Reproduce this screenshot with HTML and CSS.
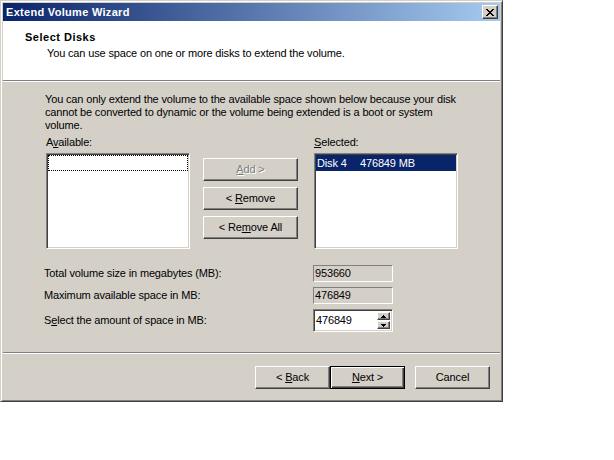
FILE: index.html
```html
<!DOCTYPE html>
<html>
<head>
<meta charset="utf-8">
<title>Extend Volume Wizard</title>
<link rel="stylesheet" href="styles.css">
</head>
<body>
<div class="window">
  <div class="titlebar">
    <span class="title">Extend Volume Wizard</span>
    <span class="close"><svg width="8" height="7" viewBox="0 0 8 7" shape-rendering="crispEdges"><path d="M0 0h2v1H0zM6 0h2v1H6zM1 1h2v1H1zM5 1h2v1H5zM2 2h4v1H2zM3 3h2v1H3zM2 4h4v1H2zM1 5h2v1H1zM5 5h2v1H5zM0 6h2v1H0zM6 6h2v1H6z" fill="#000"/></svg></span>
  </div>
  <div class="header">
    <div class="h-title">Select Disks</div>
    <div class="h-sub">You can use space on one or more disks to extend the volume.</div>
  </div>
  <div class="sep"></div>
  <div class="content">
    <p class="note">You can only extend the volume to the available space shown below because your disk<br>cannot be converted to dynamic or the volume being extended is a boot or system<br>volume.</p>
    <div class="picker">
      <div class="col">
        <div class="lbl">A<u>v</u>ailable:</div>
        <div class="listbox"><div class="focusrow"></div></div>
      </div>
      <div class="mid">
        <div class="btn disabled"><span><u>A</u>dd &gt;</span></div>
        <div class="btn"><span>&lt; <u>R</u>emove</span></div>
        <div class="btn"><span>&lt; Re<u>m</u>ove All</span></div>
      </div>
      <div class="col">
        <div class="lbl"><u>S</u>elected:</div>
        <div class="listbox"><div class="item"><span class="c1">Disk 4</span><span>476849 MB</span></div></div>
      </div>
    </div>
    <div class="fields">
      <div class="flbl">Total volume size in megabytes (MB):</div>
      <div class="ro">953660</div>
      <div class="flbl">Maximum available space in MB:</div>
      <div class="ro">476849</div>
      <div class="flbl">S<u>e</u>lect the amount of space in MB:</div>
      <div class="spin">
        <span class="spin-val">476849</span>
        <span class="spinbtns">
          <span class="sb"><svg width="5" height="3" viewBox="0 0 5 3" shape-rendering="crispEdges"><path d="M2 0h1v1H2zM1 1h3v1H1zM0 2h5v1H0z" fill="#000"/></svg></span>
          <span class="sb"><svg width="5" height="3" viewBox="0 0 5 3" shape-rendering="crispEdges"><path d="M0 0h5v1H0zM1 1h3v1H1zM2 2h1v1H2z" fill="#000"/></svg></span>
        </span>
      </div>
    </div>
  </div>
  <div class="sep"></div>
  <div class="footer">
    <div class="btn wide"><span>&lt; <u>B</u>ack</span></div>
    <div class="btn wide default"><span><u>N</u>ext &gt;</span></div>
    <div class="btn wide cancel"><span>Cancel</span></div>
  </div>
</div>
</body>
</html>
```

FILE: styles.css
```css
* { box-sizing: border-box; }

body {
  margin: 0;
  background: #fff;
  font-family: "Liberation Sans", Arial, sans-serif;
  font-size: 11px;
  letter-spacing: -0.15px;
  color: #000;
}

.window {
  width: 503px;
  height: 402px;
  background: #d4d0c8;
  border: 1px solid;
  border-color: #d4d0c8 #404040 #404040 #d4d0c8;
  padding: 2px;
  box-shadow: inset 1px 1px #fff, inset -1px -1px #808080;
  display: flex;
  flex-direction: column;
}

.titlebar {
  flex: none;
  height: 18px;
  background: linear-gradient(to right, #0a246a, #a6caf0);
  display: flex;
  align-items: center;
  justify-content: space-between;
  padding: 0 2px 0 3px;
}

.title {
  color: #fff;
  font-weight: bold;
  letter-spacing: 0.3px;
  line-height: 18px;
}

.close {
  width: 16px;
  height: 14px;
  background: #d4d0c8;
  border: 1px solid;
  border-color: #fff #404040 #404040 #fff;
  box-shadow: inset -1px -1px #808080;
  display: flex;
  align-items: center;
  justify-content: center;
}

.close svg { display: block; }

.header {
  flex: none;
  height: 59px;
  background: #fff;
  padding: 10px 0 0 22px;
  line-height: 13px;
}

.h-title {
  font-weight: bold;
  letter-spacing: 0.5px;
}

.h-sub {
  margin-top: 3px;
  padding-left: 22px;
}

.sep {
  flex: none;
  height: 2px;
  border-top: 1px solid #808080;
  border-bottom: 1px solid #fff;
}

.content {
  flex: none;
  height: 270px;
  padding: 11px 0 0 42px;
  line-height: 13px;
}

.note { margin: 0; }

.picker {
  display: flex;
  margin: 4px 0 0 1px;
}

.col {
  width: 144px;
  display: flex;
  flex-direction: column;
}

.lbl {
  height: 13px;
  margin-bottom: 4px;
}

.listbox {
  height: 96px;
  background: #fff;
  border: 1px solid;
  border-color: #808080 #fff #fff #808080;
  box-shadow: inset 1px 1px #404040, inset -1px -1px #d4d0c8;
  padding: 1px;
}

.focusrow {
  height: 16px;
  border: 1px dotted #000;
}

.item {
  height: 16px;
  line-height: 16px;
  background: #0a246a;
  color: #fff;
  padding-left: 1px;
  display: flex;
}

.c1 { width: 43px; }

.mid {
  width: 95px;
  margin: 0 16px 0 13px;
  padding-top: 22px;
  display: flex;
  flex-direction: column;
  gap: 6px;
}

.btn {
  height: 23px;
  background: #d4d0c8;
  border: 1px solid;
  border-color: #fff #404040 #404040 #fff;
  box-shadow: inset -1px -1px #808080;
  display: flex;
  align-items: center;
  justify-content: center;
  line-height: 13px;
}

.btn.disabled {
  color: #808080;
  text-shadow: 1px 1px 0 #fff;
}

.btn.wide { width: 75px; }

.btn.default {
  border-color: #000;
  box-shadow: inset 1px 1px #fff, inset -1px -1px #404040, inset -2px -2px #808080;
}

.btn.cancel { margin-left: 10px; }

.fields {
  margin: 16px 0 0 -1px;
  display: grid;
  grid-template-columns: 269px 80px;
  grid-template-rows: 17px 17px 23px;
  row-gap: 5px;
}

.flbl { align-self: center; }

.ro {
  border: 1px solid;
  border-color: #808080 #fff #fff #808080;
  padding-left: 1px;
  line-height: 15px;
}

.spin {
  background: #fff;
  border: 1px solid;
  border-color: #808080 #fff #fff #808080;
  box-shadow: inset 1px 1px #404040, inset -1px -1px #d4d0c8;
  padding: 1px;
  display: flex;
  align-items: center;
  justify-content: space-between;
}

.spin-val { padding-left: 1px; }

.spinbtns {
  align-self: stretch;
  display: flex;
  flex-direction: column;
  gap: 1px;
  padding: 1px 1px 0 0;
}

.sb {
  width: 13px;
  height: 8px;
  background: #d4d0c8;
  border: 1px solid;
  border-color: #fff #404040 #404040 #fff;
  box-shadow: inset -1px -1px #808080;
  display: flex;
  align-items: center;
  justify-content: center;
}

.sb svg { display: block; }

.footer {
  flex: 1;
  display: flex;
  justify-content: flex-end;
  padding: 12px 10px 0 0;
}
```
